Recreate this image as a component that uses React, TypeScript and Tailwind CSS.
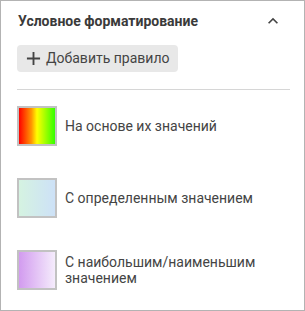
import React from "react";

const rules = [
    {
        key: "values",
        label: "На основе их значений",
        swatch: "bg-[linear-gradient(to_right,#ff0000,#ff9900_35%,#ffff00_50%,#33ff00)]",
    },
    {
        key: "exact",
        label: "С определенным значением",
        swatch: "bg-[linear-gradient(to_right,#d5f3e1,#cde1f7)]",
    },
    {
        key: "topbottom",
        label: "С наибольшим/наименьшим значением",
        swatch: "bg-[linear-gradient(to_right,#d29bef,#f5ecfc)]",
    },
];

export default function App() {
    return (
        <div className="w-[305px] h-[311px] bg-white border border-[#b3b3b3] font-['Roboto',sans-serif] text-[#333] overflow-hidden">
            {/* header */}
            <div className="flex items-center justify-between pl-[17px] pr-[21px] h-[40px]">
                <h2 className="text-[14px] font-bold text-[#3a3a3a]">Условное форматирование</h2>
                <svg width="20" height="20" viewBox="0 0 24 24" className="text-[#444]">
                    <path d="M7.41 15.41 12 10.83l4.59 4.58L18 14l-6-6-6 6z" fill="currentColor" />
                </svg>
            </div>

            <div className="px-[16px] pt-[4px]">
                <button className="flex items-center gap-[5px] h-[27px] pl-[9px] pr-[9px] bg-[#e8e8e8] rounded-[4px] text-[14px] text-[#444]">
                    <svg width="15" height="15" viewBox="0 0 16 16">
                        <path d="M8 1v14M1 8h14" stroke="#444" strokeWidth="2" />
                    </svg>
                    Добавить правило
                </button>

                <div className="mt-[17px] h-px bg-[#d6d6d6] w-[273px]" />

                <div className="flex flex-col gap-[32px] pt-[16px]">
                    {rules.map(({ key, label, swatch }) => (
                        <div key={key} className="flex items-center gap-[8px]">
                            <div className={`w-[40px] h-[40px] shrink-0 border-2 border-[#c2c2c2] ${swatch}`} />
                            <p className="text-[14px] leading-[16px] text-[#444] w-[200px]">{label}</p>
                        </div>
                    ))}
                </div>
            </div>
        </div>
    );
}
